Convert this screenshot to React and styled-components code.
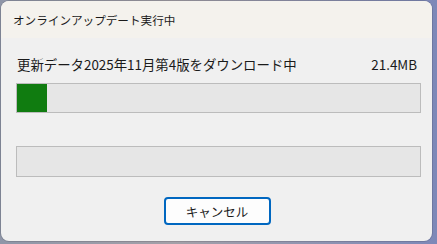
import styled, { createGlobalStyle } from "styled-components";

const GlobalStyle = createGlobalStyle`
  html, body {
    margin: 0;
    padding: 0;
  }
  body {
    width: 437px;
    height: 244px;
    overflow: hidden;
    font-family: "Noto Sans CJK JP", "Noto Sans", sans-serif;
  }
`;

const Desktop = styled.div`
  width: 437px;
  height: 244px;
  padding: 1px 0 0 1px;
  box-sizing: border-box;
  background: linear-gradient(90deg, #8f96a8 0%, #a3a0a8 40%, #7d88b8 100%);
`;

const Window = styled.div`
  width: 431px;
  height: 240px;
  border-radius: 8px;
  overflow: hidden;
  background: #f0f0f0;
  box-shadow: 0 0 0 1px rgba(0, 0, 0, 0.12);
  display: flex;
  flex-direction: column;
`;

const TitleBar = styled.div`
  height: 37px;
  flex: none;
  background: #f4f2ed;
  display: flex;
  align-items: center;
  padding-left: 12px;
  font-size: 11.6px;
  color: #1a1a1a;
`;

const Body = styled.div`
  flex: 1;
  display: flex;
  flex-direction: column;
  padding: 14px 11px 0 15px;
`;

const StatusRow = styled.div`
  display: flex;
  justify-content: space-between;
  align-items: center;
  height: 23px;
  font-size: 13.4px;
  color: #1a1a1a;
  padding: 0 4px 0 1px;
`;

const Track = styled.div`
  height: ${(p) => p.$h}px;
  margin-top: ${(p) => p.$gap}px;
  box-sizing: border-box;
  border: 1px solid #bcbcbc;
  background: #e6e6e6;
  display: flex;
`;

const Fill = styled.div`
  background: #107c10;
`;

const Footer = styled.div`
  display: flex;
  justify-content: center;
  margin-top: 20px;
  padding-right: 3px;
`;

const Button = styled.button`
  width: 107px;
  height: 28px;
  box-sizing: border-box;
  border: 2px solid #0067c0;
  border-radius: 4px;
  background: #fdfdfd;
  font-family: inherit;
  font-size: 12.5px;
  color: #1a1a1a;
  padding: 0;
`;

export default function App() {
  const progress = 7.4;
  return (
    <>
      <GlobalStyle />
      <Desktop>
        <Window>
          <TitleBar>オンラインアップデート実行中</TitleBar>
          <Body>
            <StatusRow>
              <span>更新データ2025年11月第4版をダウンロード中</span>
              <span>21.4MB</span>
            </StatusRow>
            <Track $gap={8} $h={30}>
              <Fill style={{ width: `${progress}%` }} />
            </Track>
            <Track $gap={33} $h={31} />
            <Footer>
              <Button>キャンセル</Button>
            </Footer>
          </Body>
        </Window>
      </Desktop>
    </>
  );
}
